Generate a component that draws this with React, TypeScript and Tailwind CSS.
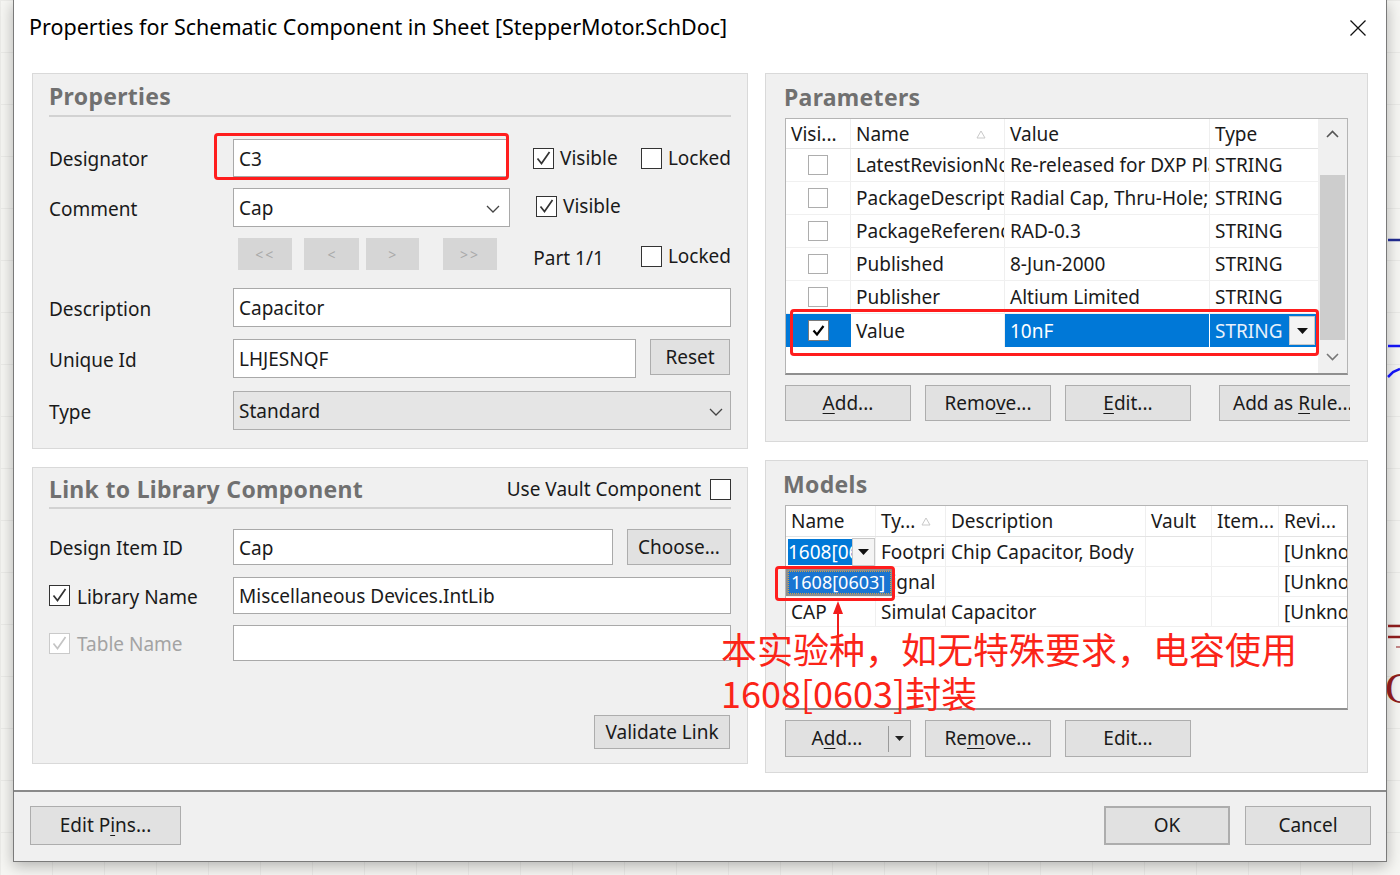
import React from "react";

type Kids = { children?: React.ReactNode; className?: string };

const Check = ({ checked = false, disabled = false }: { checked?: boolean; disabled?: boolean }) => (
  <div
    className={`w-[21px] h-[21px] shrink-0 bg-white border flex items-center justify-center ${
      disabled ? "border-[#cacaca]" : "border-[#333333]"
    }`}
  >
    {checked && (
      <svg width="17" height="17" viewBox="0 0 17 17">
        <path d="M2.5 8.5 L6.5 13.5 L14.5 2" fill="none" stroke={disabled ? "#c4c4c4" : "#333"} strokeWidth="1.7" />
      </svg>
    )}
  </div>
);

const Btn = ({ children, className = "" }: Kids) => (
  <div
    className={`flex items-center justify-center shrink-0 bg-[#e1e1e1] border border-[#adadad] text-[19px] text-[#1a1a1a] whitespace-pre ${className}`}
  >
    {children}
  </div>
);

const Field = ({ children, className = "" }: Kids) => (
  <div className={`h-full bg-white border border-[#a9a9a9] flex items-center px-[5px] pt-[2px] text-[19px] ${className}`}>
    {children}
  </div>
);

const Chevron = () => (
  <svg width="14" height="8" viewBox="0 0 14 8" className="shrink-0">
    <path d="M1 1 L7 7 L13 1" fill="none" stroke="#444" strokeWidth="1.3" />
  </svg>
);

const DropBtn = ({ className = "" }: { className?: string }) => (
  <div className={`flex items-center justify-center bg-[#f4f4f4] border border-[#c8c8c8] shrink-0 ${className}`}>
    <svg width="11" height="6" viewBox="0 0 11 6">
      <path d="M0 0 L11 0 L5.5 6 Z" fill="#111" />
    </svg>
  </div>
);

const SortMark = () => (
  <svg width="10" height="9" viewBox="0 0 10 9" className="shrink-0">
    <path d="M5 1 L9 8 L1 8 Z" fill="none" stroke="#c9c9c9" strokeWidth="1" />
  </svg>
);

const Label = ({ children, className = "" }: Kids) => (
  <div className={`w-[184px] shrink-0 text-[19px] pt-[3px] ${className}`}>{children}</div>
);

const GroupTitle = ({ children }: Kids) => (
  <span className="text-[23px] font-bold text-[#707070] tracking-[0.3px]">{children}</span>
);

const Cell = ({ children, className = "" }: Kids) => (
  <div className={`h-full shrink-0 flex items-center pl-[5px] pt-[1px] overflow-hidden whitespace-nowrap border-r border-[#efefef] ${className}`}>
    {children}
  </div>
);

const params = [
  ["LatestRevisionNote", "Re-released for DXP Platform.", "STRING"],
  ["PackageDescription", "Radial Cap, Thru-Hole; 2 Leads", "STRING"],
  ["PackageReference", "RAD-0.3", "STRING"],
  ["Published", "8-Jun-2000", "STRING"],
  ["Publisher", "Altium Limited", "STRING"],
];

function PropertiesBox() {
  return (
    <div className="w-[716px] h-[376px] border border-[#d9d9d9] bg-[#f0f0f0] px-4 flex flex-col">
      <div className="h-[43px] shrink-0 flex items-center pt-[4px] border-b-2 border-[#d2d2d2]">
        <GroupTitle>Properties</GroupTitle>
      </div>

      {/* Designator */}
      <div className="mt-[22px] h-[38px] flex items-center">
        <Label>Designator</Label>
        <div className="relative h-full w-[277px]">
          <Field className="w-full">C3</Field>
          <div className="absolute left-[-19px] top-[-6px] right-[-2px] bottom-[-3px] border-[3px] border-[#ff1d1d] rounded-[4px]" />
        </div>
        <div className="ml-[26px] w-[109px] flex items-center">
          <Check checked />
          <span className="ml-[6px] text-[19px]">Visible</span>
        </div>
        <div className="flex items-center">
          <Check />
          <span className="ml-[6px] text-[19px]">Locked</span>
        </div>
      </div>

      {/* Comment */}
      <div className="mt-[11px] h-[39px] flex items-center">
        <Label>Comment</Label>
        <Field className="w-[277px] justify-between pr-[9px]">
          <span>Cap</span>
          <Chevron />
        </Field>
        <div className="ml-[26px] flex items-center self-start mt-[4px]">
          <Check checked />
          <span className="ml-[6px] text-[19px]">Visible</span>
        </div>
      </div>

      {/* Part navigation */}
      <div className="mt-[11px] h-[32px] flex items-center">
        <div className="w-[184px] shrink-0" />
        <div className="ml-[5px] w-[55px] h-full bg-[#d6d6d6] flex items-center justify-center text-[14px] text-[#a9a9a9] tracking-[2px]">&lt;&lt;</div>
        <div className="ml-[12px] w-[55px] h-full bg-[#d6d6d6] flex items-center justify-center text-[14px] text-[#a9a9a9]">&lt;</div>
        <div className="ml-[7px] w-[54px] h-full bg-[#d6d6d6] flex items-center justify-center text-[14px] text-[#a9a9a9]">&gt;</div>
        <div className="ml-[24px] w-[55px] h-full bg-[#d6d6d6] flex items-center justify-center text-[14px] text-[#a9a9a9] tracking-[2px]">&gt;&gt;</div>
        <div className="ml-[36px] w-[109px] text-[19px] pt-[8px]">Part 1/1</div>
        <div className="flex items-center pt-[4px]">
          <Check />
          <span className="ml-[6px] text-[19px]">Locked</span>
        </div>
      </div>

      {/* Description */}
      <div className="mt-[18px] h-[39px] flex items-center">
        <Label>Description</Label>
        <Field className="flex-1">Capacitor</Field>
      </div>

      {/* Unique Id */}
      <div className="mt-[12px] h-[39px] flex items-start">
        <Label className="self-center">Unique Id</Label>
        <Field className="w-[403px]">LHJESNQF</Field>
        <Btn className="ml-[14px] w-[80px] h-[36px]">Reset</Btn>
      </div>

      {/* Type */}
      <div className="mt-[13px] h-[39px] flex items-center">
        <Label>Type</Label>
        <div className="flex-1 h-full bg-[#e5e5e5] border border-[#adadad] flex items-center justify-between pl-[5px] pt-[2px] pr-[7px] text-[19px]">
          <span>Standard</span>
          <Chevron />
        </div>
      </div>
    </div>
  );
}

function LinkBox() {
  return (
    <div className="mt-[18px] w-[716px] h-[297px] border border-[#d9d9d9] bg-[#f0f0f0] px-4 flex flex-col">
      <div className="h-[41px] shrink-0 flex items-center pt-[3px] border-b-2 border-[#d2d2d2]">
        <GroupTitle>Link to Library Component</GroupTitle>
        <span className="ml-auto text-[19px]">Use Vault Component</span>
        <div className="ml-[9px]">
          <Check />
        </div>
      </div>

      <div className="mt-[20px] h-[36px] flex items-center">
        <Label>Design Item ID</Label>
        <Field className="w-[380px]">Cap</Field>
        <Btn className="ml-[14px] w-[104px] h-[36px]">Choose...</Btn>
      </div>

      <div className="mt-[12px] h-[37px] flex items-center">
        <div className="w-[184px] shrink-0 flex items-center">
          <Check checked />
          <span className="ml-[7px] pt-[3px] text-[19px]">Library Name</span>
        </div>
        <Field className="flex-1">Miscellaneous Devices.IntLib</Field>
      </div>

      <div className="mt-[11px] h-[36px] flex items-center">
        <div className="w-[184px] shrink-0 flex items-center">
          <Check checked disabled />
          <span className="ml-[7px] pt-[3px] text-[19px] text-[#a3a3a3]">Table Name</span>
        </div>
        <Field className="flex-1" />
      </div>

      <div className="mt-[54px] h-[34px] flex justify-end pr-[1px]">
        <Btn className="w-[136px] h-full">Validate Link</Btn>
      </div>
    </div>
  );
}

function ParametersBox() {
  return (
    <div className="w-[603px] h-[369px] border border-[#d9d9d9] bg-[#f0f0f0] px-[19px] flex flex-col">
      <div className="h-[44px] shrink-0 flex items-center pt-[3px] -ml-[1px]">
        <GroupTitle>Parameters</GroupTitle>
      </div>
      <div className="h-[257px] flex bg-white border border-[#b4b4b4] border-b-2 border-b-[#8f8f8f] text-[19px]">
        <div className="w-[532px] flex flex-col">
          <div className="h-[30px] shrink-0 flex border-b border-[#e3e3e3]">
            <Cell className="w-[65px] border-[#d6d6d6]">Visi...</Cell>
            <Cell className="w-[154px] border-[#d6d6d6] pr-[18px] justify-between">
              <span>Name</span>
              <SortMark />
            </Cell>
            <Cell className="w-[205px] border-[#d6d6d6]">Value</Cell>
            <Cell className="w-[108px] border-r-0">Type</Cell>
          </div>
          {params.map((p) => (
            <div key={p[0]} className="h-[33px] shrink-0 flex border-b border-[#f0f0f0]">
              <div className="w-[65px] h-full shrink-0 flex items-center justify-center border-r border-[#efefef]">
                <div className="w-[20px] h-[20px] border border-[#adadad] bg-white" />
              </div>
              <Cell className="w-[154px]">{p[0]}</Cell>
              <Cell className="w-[205px]">{p[1]}</Cell>
              <Cell className="w-[108px] border-r-0">{p[2]}</Cell>
            </div>
          ))}
          <div className="relative h-[33px] shrink-0 flex">
            <div className="w-[65px] h-full shrink-0 flex items-center justify-center bg-[#0078d7]">
              <div className="w-[21px] h-[21px] border border-[#7a7a7a] bg-white flex items-center justify-center">
                <svg width="15" height="15" viewBox="0 0 15 15">
                  <path d="M2.5 7.5 L6 11.5 L12.5 3" fill="none" stroke="#000" strokeWidth="2.2" />
                </svg>
              </div>
            </div>
            <Cell className="w-[154px] bg-white">Value</Cell>
            <Cell className="w-[205px] bg-[#0078d7] text-white border-white">10nF</Cell>
            <div className="w-[108px] h-full shrink-0 flex items-center justify-between pl-[5px] pr-[3px] bg-[#0078d7] text-[#e8f1fb]">
              <span className="pt-[1px]">STRING</span>
              <DropBtn className="w-[26px] h-[29px]" />
            </div>
            <div className="absolute left-[4px] top-[-5px] right-[-1px] bottom-[-9px] border-[3px] border-[#ff1d1d] rounded-[4px]" />
          </div>
        </div>
        <div className="flex-1 bg-[#f0f0f0] flex flex-col items-center">
          <div className="h-[30px] flex items-center justify-center">
            <svg width="13" height="8" viewBox="0 0 13 8">
              <path d="M1 7 L6.5 1.5 L12 7" fill="none" stroke="#555" strokeWidth="1.6" />
            </svg>
          </div>
          <div className="mt-[26px] w-[25px] h-[165px] bg-[#cdcdcd]" />
          <div className="flex-1 flex items-center justify-center">
            <svg width="13" height="8" viewBox="0 0 13 8">
              <path d="M1 1 L6.5 6.5 L12 1" fill="none" stroke="#777" strokeWidth="1.6" />
            </svg>
          </div>
        </div>
      </div>
      <div className="mt-[10px] h-[36px] w-[565px] flex overflow-hidden">
        <Btn className="w-[126px] h-full">
          <span>
            <span className="underline underline-offset-[3px]">A</span>dd...
          </span>
        </Btn>
        <Btn className="ml-[14px] w-[126px] h-full">
          <span>
            Remo<span className="underline underline-offset-[3px]">v</span>e...
          </span>
        </Btn>
        <Btn className="ml-[14px] w-[126px] h-full">
          <span>
            <span className="underline underline-offset-[3px]">E</span>dit...
          </span>
        </Btn>
        <Btn className="ml-[28px] w-[140px] h-full justify-start pl-[13px]">
          <span>
            Add as <span className="underline underline-offset-[3px]">R</span>ule...
          </span>
        </Btn>
      </div>
    </div>
  );
}

function ModelsBox() {
  return (
    <div className="mt-[18px] w-[603px] h-[313px] border border-[#d9d9d9] bg-[#f0f0f0] px-[19px] flex flex-col">
      <div className="h-[44px] shrink-0 flex items-center pt-[2px] -ml-[2px]">
        <GroupTitle>Models</GroupTitle>
      </div>
      <div className="h-[205px] flex flex-col bg-white border border-[#b4b4b4] border-b-2 border-b-[#8f8f8f] text-[19px]">
        <div className="h-[31px] shrink-0 flex border-b border-[#e3e3e3]">
          <Cell className="w-[90px] border-[#d6d6d6]">Name</Cell>
          <Cell className="w-[70px] border-[#d6d6d6] gap-[6px]">
            <span>Ty...</span>
            <SortMark />
          </Cell>
          <Cell className="w-[200px] border-[#d6d6d6]">Description</Cell>
          <Cell className="w-[66px] border-[#d6d6d6]">Vault</Cell>
          <Cell className="w-[67px] border-[#d6d6d6]">Item...</Cell>
          <Cell className="w-[68px] border-r-0">Revi...</Cell>
        </div>
        <div className="h-[30px] shrink-0 flex border-b border-[#f0f0f0]">
          <div className="w-[90px] h-full shrink-0 flex items-center border-r border-[#efefef]">
            <div className="flex-1 overflow-hidden whitespace-nowrap pl-[2px] pt-[1px]">
              <span className="bg-[#0078d7] text-white">1608[0603]</span>
            </div>
            <DropBtn className="w-[23px] h-[28px]" />
          </div>
          <Cell className="w-[70px]">Footprint</Cell>
          <Cell className="w-[200px]">Chip Capacitor, Body</Cell>
          <Cell className="w-[66px]" />
          <Cell className="w-[67px]" />
          <Cell className="w-[68px] border-r-0">[Unknown]</Cell>
        </div>
        <div className="relative h-[30px] shrink-0 flex border-b border-[#f0f0f0]">
          <Cell className="w-[90px]" />
          <Cell className="w-[70px]">Signal</Cell>
          <Cell className="w-[200px]" />
          <Cell className="w-[66px]" />
          <Cell className="w-[67px]" />
          <Cell className="w-[68px] border-r-0">[Unknown]</Cell>
          <div className="absolute left-0 top-[2px] w-[107px] h-[27px] bg-[#8d8d8d] p-[2px]">
            <div className="h-full bg-[#1a75d2] border border-dotted border-[#d8a040] flex items-center pl-[2px] text-[18px] text-white whitespace-nowrap overflow-hidden">
              1608[0603]
            </div>
          </div>
          <div className="absolute left-[-11px] top-[-1px] w-[120px] h-[35px] border-[3px] border-[#ff1d1d] rounded-[4px]" />
        </div>
        <div className="h-[30px] shrink-0 flex border-b border-[#f0f0f0]">
          <Cell className="w-[90px]">CAP</Cell>
          <Cell className="w-[70px]">Simulation</Cell>
          <Cell className="w-[200px]">Capacitor</Cell>
          <Cell className="w-[66px]" />
          <Cell className="w-[67px]" />
          <Cell className="w-[68px] border-r-0">[Unknown]</Cell>
        </div>
      </div>
      <div className="mt-[10px] h-[37px] flex">
        <Btn className="w-[126px] h-full justify-start">
          <span className="w-[102px] text-center">
            A<span className="underline underline-offset-[3px]">d</span>d...
          </span>
          <span className="w-px h-[26px] bg-[#9a9a9a]" />
          <span className="flex-1 flex justify-center">
            <svg width="9" height="5" viewBox="0 0 9 5">
              <path d="M0 0 L9 0 L4.5 5 Z" fill="#222" />
            </svg>
          </span>
        </Btn>
        <Btn className="ml-[14px] w-[126px] h-full">
          <span>
            Re<span className="underline underline-offset-[3px]">m</span>ove...
          </span>
        </Btn>
        <Btn className="ml-[14px] w-[126px] h-full">Edit...</Btn>
      </div>
    </div>
  );
}

function Dialog() {
  return (
    <div className="ml-[13px] w-[1374px] h-[862px] shrink-0 bg-white border-x border-b border-[#7a7a7a] shadow-[0_4px_14px_rgba(0,0,0,0.28)] flex flex-col">
      <div className="h-[55px] shrink-0 flex items-center justify-between pl-[15px] pr-[20px]">
        <span className="text-[21.5px] text-black">Properties for Schematic Component in Sheet [StepperMotor.SchDoc]</span>
        <svg width="16" height="16" viewBox="0 0 16 16">
          <path d="M0.5 0.5 L15.5 15.5 M15.5 0.5 L0.5 15.5" stroke="#111" strokeWidth="1.3" />
        </svg>
      </div>

      <div className="h-[735px] shrink-0 flex gap-[17px] pl-[18px] pt-[18px]">
        <div className="flex flex-col">
          <PropertiesBox />
          <LinkBox />
        </div>
        <div className="flex flex-col">
          <ParametersBox />
          <ModelsBox />
        </div>
      </div>

      <div className="flex-1 bg-[#f0f0f0] border-t-2 border-[#8a8a8a] flex items-start pt-[14px] pl-[16px] pr-[15px]">
        <Btn className="w-[151px] h-[39px]">
          <span>
            Edit P<span className="underline underline-offset-[3px]">i</span>ns...
          </span>
        </Btn>
        <Btn className="ml-auto w-[126px] h-[39px] border-2 border-[#0078d7]">OK</Btn>
        <Btn className="ml-[15px] w-[126px] h-[39px]">Cancel</Btn>
      </div>
    </div>
  );
}

function CanvasStrip() {
  return (
    <svg width="13" height="875" viewBox="0 0 13 875" className="shrink-0">
      <line x1="1" y1="240" x2="13" y2="240" stroke="#1f2a8c" strokeWidth="2.5" />
      <line x1="1" y1="346" x2="13" y2="346" stroke="#1414f0" strokeWidth="2.5" />
      <path d="M1 377 L6 372 L13 369" fill="none" stroke="#1414f0" strokeWidth="2.5" />
      <line x1="1" y1="626" x2="13" y2="626" stroke="#8a1c1c" strokeWidth="2.5" />
      <line x1="1" y1="637" x2="13" y2="637" stroke="#8a1c1c" strokeWidth="2.5" />
      <line x1="9" y1="647" x2="13" y2="647" stroke="#b06060" strokeWidth="1.5" />
      <text x="-2" y="703" fontSize="44" fill="#8a1c1c" fontFamily="Liberation Serif, serif">
        G
      </text>
    </svg>
  );
}

export default function App() {
  return (
    <div className="relative w-[1400px] h-[875px] overflow-hidden bg-[#f6f6f3] bg-[linear-gradient(#ebebe8_1px,transparent_1px),linear-gradient(90deg,#ebebe8_1px,transparent_1px)] bg-[size:52px_52px] font-['Noto_Sans',sans-serif] text-[#1a1a1a]">
      <div className="flex h-full">
        <Dialog />
        <CanvasStrip />
      </div>

      {/* annotation overlay */}
      <svg width="16" height="44" viewBox="0 0 16 44" className="absolute left-[830px] top-[600px]">
        <line x1="8" y1="42" x2="8" y2="10" stroke="#f21d1d" strokeWidth="2" />
        <path d="M8 1 L3 14 L13 14 Z" fill="#f21d1d" />
      </svg>
      <div className="absolute left-[721px] top-[626px] text-[36px] leading-[44px] text-[#fb2418] font-['Noto_Sans_CJK_SC',sans-serif] whitespace-nowrap">
        <div>本实验种，如无特殊要求，电容使用</div>
        <div>1608[0603]封装</div>
      </div>
    </div>
  );
}
